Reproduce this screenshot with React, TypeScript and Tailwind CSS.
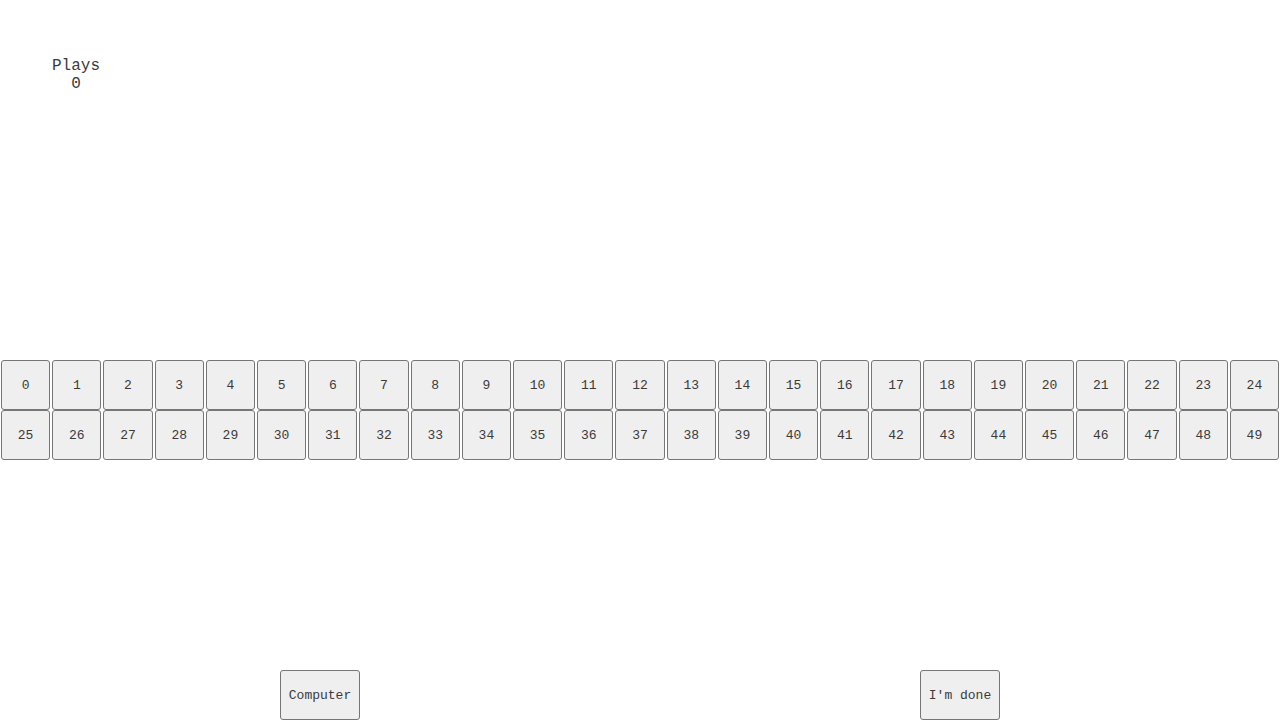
import React from 'react';

const mono = { fontFamily: '"Liberation Mono", "Courier New", monospace' };

const cells = Array.from({ length: 50 }, (_, i) => i);

const btn =
  'bg-[#efefef] border border-[#767676] rounded-[3px] text-[13px] text-[#3a3a3a] pt-px';

export default function App() {
  return (
    <div className="w-[1280px] h-[720px] bg-white flex flex-col text-[#3a3a3a]" style={mono}>
      {/* score */}
      <div className="h-[360px] shrink-0">
        <div className="w-[152px] pt-[57px] text-center text-[16px] leading-[18px]">
          <div>Plays</div>
          <div>0</div>
        </div>
      </div>

      {/* board */}
      <div className="grid grid-cols-[repeat(25,1fr)] grid-rows-[50px_50px] shrink-0">
        {cells.map((n) => (
          <button key={n} className={`mx-px h-[50px] ${btn}`}>
            {n}
          </button>
        ))}
      </div>

      <div className="flex-1" />

      {/* controls */}
      <div className="flex shrink-0">
        <div className="flex-1 flex justify-center">
          <button className={`w-[80px] h-[50px] ${btn}`}>Computer</button>
        </div>
        <div className="flex-1 flex justify-center">
          <button className={`w-[80px] h-[50px] ${btn}`}>I'm done</button>
        </div>
      </div>
    </div>
  );
}
